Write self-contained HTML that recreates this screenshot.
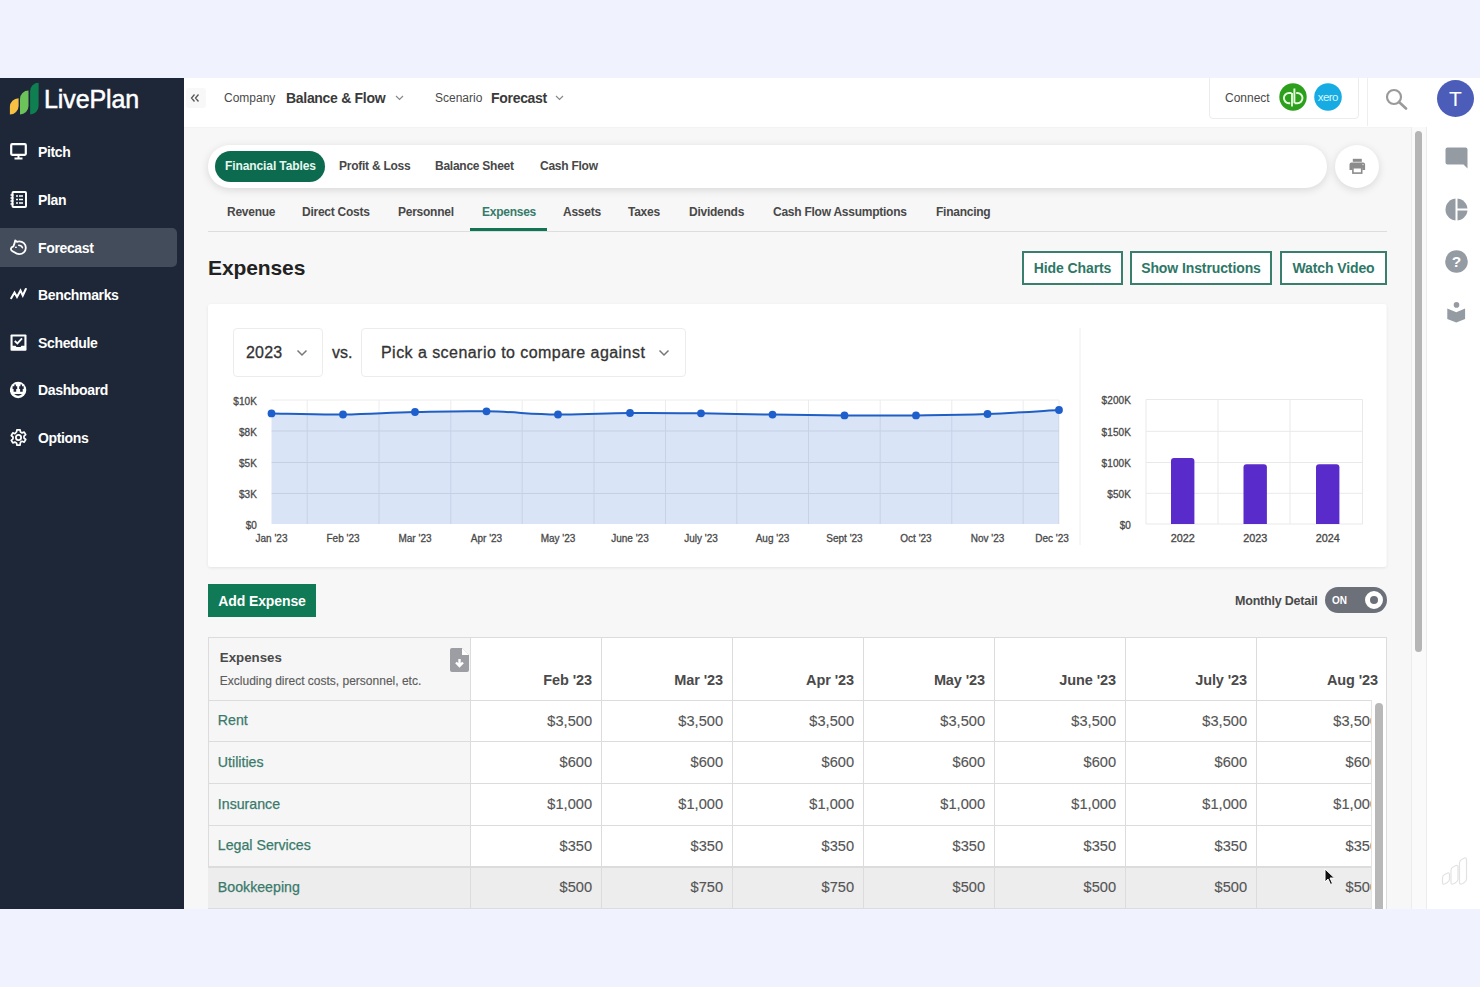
<!DOCTYPE html>
<html><head><meta charset="utf-8">
<style>
*{margin:0;padding:0;box-sizing:border-box}
html,body{width:1480px;height:987px;overflow:hidden;background:#f0f3fd;font-family:"Liberation Sans",sans-serif}
.a{position:absolute;white-space:nowrap}
#app{position:absolute;left:0;top:78px;width:1480px;height:831px;background:#f7f7f7;overflow:hidden}
#side{position:absolute;left:0;top:0;width:184px;height:831px;background:#1e2738}
.nav{position:absolute;left:0;width:177px;height:39px;color:#fff;font-weight:bold;font-size:14px;letter-spacing:-0.35px}
.nav .t{position:absolute;left:38px;top:12px;line-height:16px}
.nav svg{position:absolute;left:10px;top:11px}
.nav.on{background:#434c5a;border-radius:0 5px 5px 0}
#hdr{position:absolute;left:184px;top:0;width:1296px;height:49px;background:#fff;box-shadow:0 0.5px 0 #f0f0f0}
.tab{position:absolute;top:0;font-size:12px;font-weight:bold;color:#484848;letter-spacing:-0.25px;line-height:14px}
.btn{position:absolute;top:173px;height:34px;border:2px solid #3a7e6d;color:#2d7766;font-weight:bold;font-size:14px;line-height:30px;text-align:center;background:#fff;letter-spacing:-0.1px}
.ylab{position:absolute;font-size:10px;color:#555;text-align:right;line-height:12px;letter-spacing:-0.2px}
.xlab{position:absolute;font-size:10px;color:#555;text-align:center;line-height:12px;width:60px;letter-spacing:-0.2px}
table{border-collapse:collapse}
</style></head><body>
<div id="app">
  <!-- sidebar -->
  <div id="side">
    <svg class="a" style="left:9px;top:4px" width="32" height="34" viewBox="0 0 32 34"><path d="M0.90 32.60 V25.00 A8.70 8.70 0 0 1 9.60 16.30 V23.90 A8.70 8.70 0 0 1 0.90 32.60 Z" fill="#f7c244"/><path d="M11.00 32.60 V16.90 A8.50 8.50 0 0 1 19.50 8.40 V24.10 A8.50 8.50 0 0 1 11.00 32.60 Z" fill="#6cc35a"/><path d="M21.10 32.50 V9.20 A8.50 8.50 0 0 1 29.60 0.70 V24.00 A8.50 8.50 0 0 1 21.10 32.50 Z" fill="#0f7e51"/></svg>
    <div class="a" style="left:44px;top:6px;font-size:25px;color:#fff;line-height:30px;letter-spacing:-0.1px;-webkit-text-stroke:0.5px #fff">LivePlan</div>

    <div class="nav" style="top:54px">
      <svg width="17" height="17" viewBox="0 0 17 17"><rect x="1.2" y="1.2" width="14.6" height="10.6" rx="1" fill="none" stroke="#fff" stroke-width="2.2"/><rect x="7.5" y="12" width="2" height="3" fill="#fff"/><rect x="4.5" y="14.5" width="8" height="2" fill="#fff"/></svg>
      <div class="t">Pitch</div></div>
    <div class="nav" style="top:102px">
      <svg width="17" height="17" viewBox="0 0 17 17"><rect x="2.5" y="1" width="13.5" height="15" rx="1" fill="none" stroke="#fff" stroke-width="2"/><path d="M0.5 4h3M0.5 7h3M0.5 10h3M0.5 13h3" stroke="#fff" stroke-width="1.3"/><path d="M6 5h2M9 5h4M6 8.5h2M9 8.5h4M6 12h2M9 12h4" stroke="#fff" stroke-width="1.6"/></svg>
      <div class="t">Plan</div></div>
    <div class="nav on" style="top:150px">
      <svg width="17" height="17" viewBox="0 0 17 17"><path d="M5.2 1.5 L6.9 2.8 C7.6 2.5 8.4 2.3 9.2 2.3 C12.9 2.3 15.8 5.1 15.8 8.8 C15.8 12.6 12.9 15.2 9.2 15.2 C7.2 15.2 5.8 14.4 4.4 13.3 C3.2 12.4 1 12.2 0.9 10.2 C0.8 8.6 2 7.9 3.4 7.4 C4.2 5.5 4.8 3.6 5.2 1.5 Z" fill="none" stroke="#fff" stroke-width="1.8" stroke-linejoin="round"/><path d="M4.8 9 L6 7 L7 9Z" fill="#fff"/><path d="M8.7 6.3 Q11.4 6.3 12.5 8.7" fill="none" stroke="#fff" stroke-width="1.5" stroke-linecap="round"/></svg>
      <div class="t">Forecast</div></div>
    <div class="nav" style="top:196.5px">
      <svg width="17" height="17" viewBox="0 0 17 17"><path d="M1.2 12.2 L4.5 6.5 L7 11 L10.5 4.5 L12.8 9.5 L15.8 3" fill="none" stroke="#fff" stroke-width="2" stroke-linejoin="miter" stroke-linecap="round"/></svg>
      <div class="t">Benchmarks</div></div>
    <div class="nav" style="top:245px">
      <svg width="17" height="17" viewBox="0 0 17 17"><rect x="0.5" y="0.5" width="16" height="16.3" rx="1" fill="#fff"/><path d="M2.6 2.6 H14.4 V11.8 H11.5 L10.5 13 H6.5 L5.5 11.8 H2.6Z" fill="#1e2738"/><path d="M4.8 7 L7.4 9.4 L12 4.4" fill="none" stroke="#fff" stroke-width="1.9"/></svg>
      <div class="t">Schedule</div></div>
    <div class="nav" style="top:292px">
      <svg width="18" height="18" viewBox="0 0 18 18"><circle cx="8.1" cy="9" r="8.2" fill="#fff"/><path d="M4.3 3.4 H5.9 V5.2 H7.2 V8.1 H6.2 V10.8 H3.6 V8.1 H2.6 V5.2 H4.3Z" fill="#1e2738"/><path d="M10.4 3.4 H12 V5.2 H13.7 V8.1 H12.7 V10.8 H10.1 V8.1 H9.2 V5.2 H10.4Z" fill="#1e2738"/><path d="M4.1 13 H12.2 Q8.1 16.4 4.1 13Z" fill="#1e2738"/></svg>
      <div class="t">Dashboard</div></div>
    <div class="nav" style="top:340px">
      <svg width="17" height="17" viewBox="0 0 17 17"><path d="M7 0.8h3l0.5 2.2 1.6 0.9 2.1-0.8 1.5 2.6-1.7 1.5v1.8l1.7 1.5-1.5 2.6-2.1-0.8-1.6 0.9L10 16.2H7l-0.5-2.2-1.6-0.9-2.1 0.8-1.5-2.6 1.7-1.5V8l-1.7-1.5 1.5-2.6 2.1 0.8L6.5 3z" fill="none" stroke="#fff" stroke-width="1.7" stroke-linejoin="round"/><circle cx="8.5" cy="8.5" r="2.6" fill="none" stroke="#fff" stroke-width="1.8"/></svg>
      <div class="t">Options</div></div>
  </div>

  <!-- header -->
  <div id="hdr">
    <div class="a" style="left:2px;top:10px;width:20px;height:20px;background:#f8f8f8;border-radius:3px"></div>
    <svg class="a" style="left:6px;top:15px" width="10" height="10" viewBox="0 0 10 10"><path d="M4.5 1.5 L1.5 5 L4.5 8.5 M8.5 1.5 L5.5 5 L8.5 8.5" fill="none" stroke="#555" stroke-width="1.3"/></svg>
    <div class="a" style="left:40px;top:13px;font-size:12px;color:#4a4a4a;line-height:14px;letter-spacing:0px">Company</div>
    <div class="a" style="left:102px;top:12px;font-size:14px;font-weight:bold;color:#3a3a3a;line-height:16px;letter-spacing:-0.3px">Balance &amp; Flow</div>
    <svg class="a" style="left:211px;top:17px" width="9" height="6" viewBox="0 0 9 6"><path d="M1 1 L4.5 4.5 L8 1" fill="none" stroke="#888" stroke-width="1.2"/></svg>
    <div class="a" style="left:251px;top:13px;font-size:12px;color:#4a4a4a;line-height:14px">Scenario</div>
    <div class="a" style="left:307px;top:12px;font-size:14px;font-weight:bold;color:#3a3a3a;line-height:16px;letter-spacing:-0.3px">Forecast</div>
    <svg class="a" style="left:371px;top:17px" width="9" height="6" viewBox="0 0 9 6"><path d="M1 1 L4.5 4.5 L8 1" fill="none" stroke="#888" stroke-width="1.2"/></svg>

    <div class="a" style="left:1025px;top:-2px;width:150px;height:43px;border:1px solid #ececec;border-radius:0 0 4px 4px;background:#fff"></div>
    <div class="a" style="left:1041px;top:13px;font-size:12px;color:#4a4a4a;line-height:14px">Connect</div>
    <svg class="a" style="left:1095px;top:5px" width="28" height="28" viewBox="0 0 28 28"><circle cx="14" cy="14" r="13.7" fill="#2c9f1c"/><path d="M12.6 10 H10 A5.1 5.1 0 0 0 10 20.2 H11.2 M13 10 V23.5 M15.6 20.2 H18.4 A5.1 5.1 0 0 0 18.4 10 H17.2 M15.4 5.5 V20.2" fill="none" stroke="#e8ffe0" stroke-width="1.9"/></svg>
    <svg class="a" style="left:1130px;top:5px" width="28" height="28" viewBox="0 0 28 28"><circle cx="14" cy="14" r="13.8" fill="#16ace3"/><text x="13.8" y="17.6" font-family="Liberation Sans" font-size="11.5" fill="#d8f6ff" text-anchor="middle" letter-spacing="-0.6">xero</text></svg>
    <div class="a" style="left:1183px;top:0;width:1px;height:48px;background:#eee"></div>
    <svg class="a" style="left:1201px;top:10px" width="23" height="22" viewBox="0 0 23 22"><circle cx="9" cy="9" r="7" fill="none" stroke="#9a9a9a" stroke-width="2.2"/><path d="M14 14 L21 20.5" stroke="#9a9a9a" stroke-width="2.6" stroke-linecap="round"/></svg>
    <div class="a" style="left:1253px;top:2px;width:37px;height:37px;border-radius:50%;background:#4b5db8;color:#fff;font-size:21px;line-height:37px;text-align:center">T</div>
  </div>

  <!-- right rail -->
  <div class="a" style="left:1426px;top:49px;width:54px;height:782px;background:#fff;border-left:1px solid #ececec"></div>
  <div class="a" style="left:1411px;top:49px;width:15px;height:782px;background:#fafafa;border-left:1px solid #ececec"></div>
  <div class="a" style="left:1415px;top:53px;width:7px;height:521px;background:#b5b5b5;border-radius:4px"></div>
  <svg class="a" style="left:1445px;top:69px" width="23" height="22" viewBox="0 0 23 22"><path d="M2.5 0.5 h18 a2 2 0 0 1 2 2 v19 l-4 -4 h-16 a2 2 0 0 1 -2 -2 v-13 a2 2 0 0 1 2 -2z" fill="#959ba3"/></svg>
  <svg class="a" style="left:1445px;top:120px" width="23" height="23" viewBox="0 0 23 23"><circle cx="11.5" cy="11.5" r="11" fill="#959ba3"/><path d="M11.5 0 v23 M11.5 11.5 h12" stroke="#fff" stroke-width="2"/></svg>
  <svg class="a" style="left:1445px;top:172px" width="23" height="23" viewBox="0 0 23 23"><circle cx="11.5" cy="11.5" r="11.3" fill="#959ba3"/><text x="11.5" y="17.2" font-family="Liberation Sans" font-weight="bold" font-size="15.5" fill="#fff" text-anchor="middle">?</text></svg>
  <svg class="a" style="left:1446px;top:222px" width="21" height="24" viewBox="0 0 21 24"><circle cx="10.5" cy="4.9" r="2.8" fill="#959ba3"/><path d="M1.3 8.4 L10.3 12.2 L19.1 8.4 V19 L10.3 22.6 L1.3 19 Z" fill="#959ba3"/></svg>
  <svg class="a" style="left:1440px;top:778px" width="28" height="31" viewBox="0 0 28 31"><path d="M2.5 26.5 L2.5 22.0 Q2.5 19.5 5.0 18.3 L7.0 17.2 Q9.5 16.0 9.5 18.5 L9.5 23.0 Q9.5 25.5 7.0 26.7 L5.0 27.8 Q2.5 29.0 2.5 26.5 Z M11.0 26.5 L11.0 14.5 Q11.0 12.0 13.5 10.8 L15.5 9.7 Q18.0 8.5 18.0 11.0 L18.0 23.0 Q18.0 25.5 15.5 26.7 L13.5 27.8 Q11.0 29.0 11.0 26.5 Z M19.5 26.5 L19.5 7.0 Q19.5 4.5 22.0 3.3 L24.0 2.2 Q26.5 1.0 26.5 3.5 L26.5 23.0 Q26.5 25.5 24.0 26.7 L22.0 27.8 Q19.5 29.0 19.5 26.5 Z" fill="none" stroke="#e2e2e2" stroke-width="1.2"/></svg>

  <!-- tab bar -->
  <div class="a" style="left:208px;top:66.5px;width:1119px;height:43.5px;background:#fff;border-radius:22px;box-shadow:0 2px 8px rgba(0,0,0,0.13)"></div>
  <div class="a" style="left:214.5px;top:72.5px;width:110.5px;height:31px;background:#0c6b4f;border-radius:15.5px"></div>
  <div class="tab" style="left:225px;top:81px;color:#e6f7ef;letter-spacing:-0.1px">Financial Tables</div>
  <div class="tab" style="left:339px;top:81px">Profit &amp; Loss</div>
  <div class="tab" style="left:435px;top:81px">Balance Sheet</div>
  <div class="tab" style="left:540px;top:81px">Cash Flow</div>
  <div class="a" style="left:1335px;top:67px;width:44px;height:43px;background:#fff;border-radius:50%;box-shadow:0 2px 8px rgba(0,0,0,0.13)"></div>
  <svg class="a" style="left:1349px;top:80px" width="17" height="16" viewBox="0 0 17 16"><rect x="3.8" y="0.8" width="9" height="3" fill="#8c8c8c"/><path d="M2.5 4.6 h11.6 a2 2 0 0 1 2 2 v5.4 h-2.8 v-2.6 h-10 v2.6 h-2.8 v-5.4 a2 2 0 0 1 2 -2z" fill="#8c8c8c"/><rect x="3.9" y="9.7" width="8.8" height="5.4" fill="#fff" stroke="#8c8c8c" stroke-width="1.6"/><circle cx="14" cy="6.6" r="0.6" fill="#fff"/></svg>

  <!-- sub tabs -->
  <div class="tab" style="left:227px;top:127px">Revenue</div>
  <div class="tab" style="left:302px;top:127px">Direct Costs</div>
  <div class="tab" style="left:398px;top:127px">Personnel</div>
  <div class="tab" style="left:482px;top:127px;color:#367b6a">Expenses</div>
  <div class="tab" style="left:563px;top:127px">Assets</div>
  <div class="tab" style="left:628px;top:127px">Taxes</div>
  <div class="tab" style="left:689px;top:127px">Dividends</div>
  <div class="tab" style="left:773px;top:127px">Cash Flow Assumptions</div>
  <div class="tab" style="left:936px;top:127px">Financing</div>
  <div class="a" style="left:208px;top:153px;width:1179px;height:1px;background:#ddd"></div>
  <div class="a" style="left:469.5px;top:149.5px;width:77.5px;height:3.5px;background:#117555"></div>

  <!-- title + buttons -->
  <div class="a" style="left:208px;top:178px;font-size:21px;font-weight:bold;color:#222;line-height:24px;letter-spacing:-0.1px">Expenses</div>
  <div class="btn" style="left:1022px;width:101px">Hide Charts</div>
  <div class="btn" style="left:1130px;width:142px">Show Instructions</div>
  <div class="btn" style="left:1280px;width:107px">Watch Video</div>
<div class="a" style="left:0;top:-78px;width:1480px;height:987px">
<svg class="a" style="left:0;top:0" width="1480" height="987" viewBox="0 0 1480 987">
<defs><filter id="sh" x="-5%" y="-5%" width="110%" height="120%"><feDropShadow dx="0" dy="1" stdDeviation="1.5" flood-color="#000" flood-opacity="0.08"/></filter></defs>
<rect x="208" y="304" width="1178.5" height="263" rx="3" fill="#fff" filter="url(#sh)"/>
<line x1="271.5" y1="400" x2="1059" y2="400" stroke="#ececec" stroke-width="1"/>
<line x1="271.5" y1="431" x2="1059" y2="431" stroke="#ececec" stroke-width="1"/>
<line x1="271.5" y1="462.5" x2="1059" y2="462.5" stroke="#ececec" stroke-width="1"/>
<line x1="271.5" y1="493.5" x2="1059" y2="493.5" stroke="#ececec" stroke-width="1"/>
<line x1="307.2" y1="400" x2="307.2" y2="524" stroke="#ececec" stroke-width="1"/>
<line x1="379.0" y1="400" x2="379.0" y2="524" stroke="#ececec" stroke-width="1"/>
<line x1="450.8" y1="400" x2="450.8" y2="524" stroke="#ececec" stroke-width="1"/>
<line x1="522.2" y1="400" x2="522.2" y2="524" stroke="#ececec" stroke-width="1"/>
<line x1="594.0" y1="400" x2="594.0" y2="524" stroke="#ececec" stroke-width="1"/>
<line x1="665.5" y1="400" x2="665.5" y2="524" stroke="#ececec" stroke-width="1"/>
<line x1="736.8" y1="400" x2="736.8" y2="524" stroke="#ececec" stroke-width="1"/>
<line x1="808.5" y1="400" x2="808.5" y2="524" stroke="#ececec" stroke-width="1"/>
<line x1="880.2" y1="400" x2="880.2" y2="524" stroke="#ececec" stroke-width="1"/>
<line x1="951.8" y1="400" x2="951.8" y2="524" stroke="#ececec" stroke-width="1"/>
<line x1="1023.2" y1="400" x2="1023.2" y2="524" stroke="#ececec" stroke-width="1"/>
<line x1="1059.0" y1="400" x2="1059.0" y2="524" stroke="#ececec" stroke-width="1"/>
<path d="M271.5 413.4 C285.8 413.6 314.3 414.8 343.0 414.5 C371.7 414.2 386.3 412.6 415.0 412.0 C443.7 411.4 457.9 410.8 486.5 411.3 C515.1 411.8 529.3 414.2 558.0 414.5 C586.7 414.8 601.4 413.2 630.0 413.0 C658.6 412.8 672.5 413.0 701.0 413.3 C729.5 413.6 743.8 414.2 772.5 414.6 C801.2 415.0 815.8 415.2 844.5 415.4 C873.2 415.6 887.4 415.7 916.0 415.4 C944.6 415.1 958.9 415.1 987.5 414.0 C1016.1 412.9 1044.7 410.8 1059.0 410.0 L1059 524 L271.5 524 Z" fill="#d9e4f7"/>
<clipPath id="ac"><path d="M271.5 413.4 C285.8 413.6 314.3 414.8 343.0 414.5 C371.7 414.2 386.3 412.6 415.0 412.0 C443.7 411.4 457.9 410.8 486.5 411.3 C515.1 411.8 529.3 414.2 558.0 414.5 C586.7 414.8 601.4 413.2 630.0 413.0 C658.6 412.8 672.5 413.0 701.0 413.3 C729.5 413.6 743.8 414.2 772.5 414.6 C801.2 415.0 815.8 415.2 844.5 415.4 C873.2 415.6 887.4 415.7 916.0 415.4 C944.6 415.1 958.9 415.1 987.5 414.0 C1016.1 412.9 1044.7 410.8 1059.0 410.0 L1059 524 L271.5 524 Z"/></clipPath>
<g clip-path="url(#ac)">
<line x1="271.5" y1="431" x2="1059" y2="431" stroke="#c5d0e3" stroke-width="1"/>
<line x1="271.5" y1="462.5" x2="1059" y2="462.5" stroke="#c5d0e3" stroke-width="1"/>
<line x1="271.5" y1="493.5" x2="1059" y2="493.5" stroke="#c5d0e3" stroke-width="1"/>
<line x1="307.2" y1="400" x2="307.2" y2="524" stroke="#c8d2e5" stroke-width="1"/>
<line x1="379.0" y1="400" x2="379.0" y2="524" stroke="#c8d2e5" stroke-width="1"/>
<line x1="450.8" y1="400" x2="450.8" y2="524" stroke="#c8d2e5" stroke-width="1"/>
<line x1="522.2" y1="400" x2="522.2" y2="524" stroke="#c8d2e5" stroke-width="1"/>
<line x1="594.0" y1="400" x2="594.0" y2="524" stroke="#c8d2e5" stroke-width="1"/>
<line x1="665.5" y1="400" x2="665.5" y2="524" stroke="#c8d2e5" stroke-width="1"/>
<line x1="736.8" y1="400" x2="736.8" y2="524" stroke="#c8d2e5" stroke-width="1"/>
<line x1="808.5" y1="400" x2="808.5" y2="524" stroke="#c8d2e5" stroke-width="1"/>
<line x1="880.2" y1="400" x2="880.2" y2="524" stroke="#c8d2e5" stroke-width="1"/>
<line x1="951.8" y1="400" x2="951.8" y2="524" stroke="#c8d2e5" stroke-width="1"/>
<line x1="1023.2" y1="400" x2="1023.2" y2="524" stroke="#c8d2e5" stroke-width="1"/>
<line x1="1059.0" y1="400" x2="1059.0" y2="524" stroke="#c8d2e5" stroke-width="1"/>
</g>
<path d="M271.5 413.4 C285.8 413.6 314.3 414.8 343.0 414.5 C371.7 414.2 386.3 412.6 415.0 412.0 C443.7 411.4 457.9 410.8 486.5 411.3 C515.1 411.8 529.3 414.2 558.0 414.5 C586.7 414.8 601.4 413.2 630.0 413.0 C658.6 412.8 672.5 413.0 701.0 413.3 C729.5 413.6 743.8 414.2 772.5 414.6 C801.2 415.0 815.8 415.2 844.5 415.4 C873.2 415.6 887.4 415.7 916.0 415.4 C944.6 415.1 958.9 415.1 987.5 414.0 C1016.1 412.9 1044.7 410.8 1059.0 410.0" fill="none" stroke="#1f5ec4" stroke-width="2"/>
<circle cx="271.5" cy="413.4" r="3.9" fill="#1f5fcc"/>
<circle cx="343.0" cy="414.5" r="3.9" fill="#1f5fcc"/>
<circle cx="415.0" cy="412.0" r="3.9" fill="#1f5fcc"/>
<circle cx="486.5" cy="411.3" r="3.9" fill="#1f5fcc"/>
<circle cx="558.0" cy="414.5" r="3.9" fill="#1f5fcc"/>
<circle cx="630.0" cy="413.0" r="3.9" fill="#1f5fcc"/>
<circle cx="701.0" cy="413.3" r="3.9" fill="#1f5fcc"/>
<circle cx="772.5" cy="414.6" r="3.9" fill="#1f5fcc"/>
<circle cx="844.5" cy="415.4" r="3.9" fill="#1f5fcc"/>
<circle cx="916.0" cy="415.4" r="3.9" fill="#1f5fcc"/>
<circle cx="987.5" cy="414.0" r="3.9" fill="#1f5fcc"/>
<circle cx="1059.0" cy="410.0" r="3.9" fill="#1f5fcc"/>
<text x="257" y="404.8" font-size="10" fill="#4a4a4a" stroke="#4a4a4a" stroke-width="0.3" text-anchor="end" letter-spacing="0.1">$10K</text>
<text x="257" y="435.8" font-size="10" fill="#4a4a4a" stroke="#4a4a4a" stroke-width="0.3" text-anchor="end" letter-spacing="0.1">$8K</text>
<text x="257" y="467.3" font-size="10" fill="#4a4a4a" stroke="#4a4a4a" stroke-width="0.3" text-anchor="end" letter-spacing="0.1">$5K</text>
<text x="257" y="498.3" font-size="10" fill="#4a4a4a" stroke="#4a4a4a" stroke-width="0.3" text-anchor="end" letter-spacing="0.1">$3K</text>
<text x="257" y="528.8" font-size="10" fill="#4a4a4a" stroke="#4a4a4a" stroke-width="0.3" text-anchor="end" letter-spacing="0.1">$0</text>
<text x="271.5" y="541.6" font-size="10" fill="#4a4a4a" stroke="#4a4a4a" stroke-width="0.3" text-anchor="middle" letter-spacing="0">Jan &#39;23</text>
<text x="343.0" y="541.6" font-size="10" fill="#4a4a4a" stroke="#4a4a4a" stroke-width="0.3" text-anchor="middle" letter-spacing="0">Feb &#39;23</text>
<text x="415.0" y="541.6" font-size="10" fill="#4a4a4a" stroke="#4a4a4a" stroke-width="0.3" text-anchor="middle" letter-spacing="0">Mar &#39;23</text>
<text x="486.5" y="541.6" font-size="10" fill="#4a4a4a" stroke="#4a4a4a" stroke-width="0.3" text-anchor="middle" letter-spacing="0">Apr &#39;23</text>
<text x="558.0" y="541.6" font-size="10" fill="#4a4a4a" stroke="#4a4a4a" stroke-width="0.3" text-anchor="middle" letter-spacing="0">May &#39;23</text>
<text x="630.0" y="541.6" font-size="10" fill="#4a4a4a" stroke="#4a4a4a" stroke-width="0.3" text-anchor="middle" letter-spacing="0">June &#39;23</text>
<text x="701.0" y="541.6" font-size="10" fill="#4a4a4a" stroke="#4a4a4a" stroke-width="0.3" text-anchor="middle" letter-spacing="0">July &#39;23</text>
<text x="772.5" y="541.6" font-size="10" fill="#4a4a4a" stroke="#4a4a4a" stroke-width="0.3" text-anchor="middle" letter-spacing="0">Aug &#39;23</text>
<text x="844.5" y="541.6" font-size="10" fill="#4a4a4a" stroke="#4a4a4a" stroke-width="0.3" text-anchor="middle" letter-spacing="0">Sept &#39;23</text>
<text x="916.0" y="541.6" font-size="10" fill="#4a4a4a" stroke="#4a4a4a" stroke-width="0.3" text-anchor="middle" letter-spacing="0">Oct &#39;23</text>
<text x="987.5" y="541.6" font-size="10" fill="#4a4a4a" stroke="#4a4a4a" stroke-width="0.3" text-anchor="middle" letter-spacing="0">Nov &#39;23</text>
<text x="1052.0" y="541.6" font-size="10" fill="#4a4a4a" stroke="#4a4a4a" stroke-width="0.3" text-anchor="middle" letter-spacing="0">Dec &#39;23</text>
<line x1="1080" y1="328" x2="1080" y2="545" stroke="#eeeeee" stroke-width="1"/>
<line x1="1146" y1="399.5" x2="1362.5" y2="399.5" stroke="#e9e9e9" stroke-width="1"/>
<line x1="1146" y1="431.3" x2="1362.5" y2="431.3" stroke="#e9e9e9" stroke-width="1"/>
<line x1="1146" y1="462.5" x2="1362.5" y2="462.5" stroke="#e9e9e9" stroke-width="1"/>
<line x1="1146" y1="493.3" x2="1362.5" y2="493.3" stroke="#e9e9e9" stroke-width="1"/>
<line x1="1146" y1="524" x2="1362.5" y2="524" stroke="#e9e9e9" stroke-width="1"/>
<line x1="1146" y1="399.5" x2="1146" y2="524" stroke="#e9e9e9" stroke-width="1"/>
<line x1="1218" y1="399.5" x2="1218" y2="524" stroke="#e9e9e9" stroke-width="1"/>
<line x1="1290" y1="399.5" x2="1290" y2="524" stroke="#e9e9e9" stroke-width="1"/>
<line x1="1362.5" y1="399.5" x2="1362.5" y2="524" stroke="#e9e9e9" stroke-width="1"/>
<path d="M1171.0 524 V461.0 a3 3 0 0 1 3 -3 h17.4 a3 3 0 0 1 3 3 V524 Z" fill="#5a2bcb"/>
<path d="M1243.5 524 V467.3 a3 3 0 0 1 3 -3 h17.4 a3 3 0 0 1 3 3 V524 Z" fill="#5a2bcb"/>
<path d="M1316.0 524 V467.3 a3 3 0 0 1 3 -3 h17.4 a3 3 0 0 1 3 3 V524 Z" fill="#5a2bcb"/>
<text x="1131" y="404.3" font-size="10" fill="#4a4a4a" stroke="#4a4a4a" stroke-width="0.3" text-anchor="end" letter-spacing="0.1">$200K</text>
<text x="1131" y="436.1" font-size="10" fill="#4a4a4a" stroke="#4a4a4a" stroke-width="0.3" text-anchor="end" letter-spacing="0.1">$150K</text>
<text x="1131" y="467.3" font-size="10" fill="#4a4a4a" stroke="#4a4a4a" stroke-width="0.3" text-anchor="end" letter-spacing="0.1">$100K</text>
<text x="1131" y="498.1" font-size="10" fill="#4a4a4a" stroke="#4a4a4a" stroke-width="0.3" text-anchor="end" letter-spacing="0.1">$50K</text>
<text x="1131" y="528.8" font-size="10" fill="#4a4a4a" stroke="#4a4a4a" stroke-width="0.3" text-anchor="end" letter-spacing="0.1">$0</text>
<text x="1182.7" y="541.8" font-size="10.8" fill="#4a4a4a" stroke="#4a4a4a" stroke-width="0.35" text-anchor="middle">2022</text>
<text x="1255.2" y="541.8" font-size="10.8" fill="#4a4a4a" stroke="#4a4a4a" stroke-width="0.35" text-anchor="middle">2023</text>
<text x="1327.7" y="541.8" font-size="10.8" fill="#4a4a4a" stroke="#4a4a4a" stroke-width="0.35" text-anchor="middle">2024</text>
</svg>
<div class="a" style="left:233px;top:328px;width:90px;height:49px;border:1px solid #ececec;border-radius:4px;background:#fff"></div>
<div class="a" style="left:246px;top:344px;font-size:16px;color:#333;line-height:18px;letter-spacing:0.2px;-webkit-text-stroke:0.3px #333">2023</div>
<svg class="a" style="left:296px;top:349px" width="12" height="8" viewBox="0 0 12 8"><path d="M1.5 1.5 L6 6 L10.5 1.5" fill="none" stroke="#777" stroke-width="1.5"/></svg>
<div class="a" style="left:332px;top:344px;font-size:16px;color:#333;line-height:18px;-webkit-text-stroke:0.3px #333">vs.</div>
<div class="a" style="left:361px;top:328px;width:325px;height:49px;border:1px solid #ececec;border-radius:4px;background:#fff"></div>
<div class="a" style="left:381px;top:344px;font-size:16px;color:#333;line-height:18px;letter-spacing:0.45px;-webkit-text-stroke:0.3px #333">Pick a scenario to compare against</div>
<svg class="a" style="left:658px;top:349px" width="12" height="8" viewBox="0 0 12 8"><path d="M1.5 1.5 L6 6 L10.5 1.5" fill="none" stroke="#777" stroke-width="1.5"/></svg>
<div class="a" style="left:208px;top:584px;width:108px;height:33px;background:#0f7a55;color:#fff;font-weight:bold;font-size:14px;line-height:35px;text-align:center;letter-spacing:-0.1px">Add Expense</div>
<div class="a" style="left:1235px;top:594px;font-size:12.5px;font-weight:bold;color:#4a4a4a;line-height:14px;letter-spacing:-0.2px">Monthly Detail</div>
<div class="a" style="left:1325px;top:587px;width:62px;height:26px;background:#6b7079;border-radius:13px"></div>
<div class="a" style="left:1332px;top:595px;font-size:10px;font-weight:bold;color:#fff;line-height:11px">ON</div>
<div class="a" style="left:1365px;top:591px;width:18px;height:18px;border-radius:50%;border:5px solid #fff;background:#6b7079"></div>
<div class="a" style="left:208px;top:637px;width:1179px;height:280px;overflow:hidden">
<div class="a" style="left:0;top:0;width:1179px;height:280px;background:#fff;border:1px solid #dcdcdc"></div>
<div class="a" style="left:0;top:0;width:263px;height:280px;background:#f6f6f6;border:1px solid #dcdcdc"></div>
<div class="a" style="left:0;top:229.3px;width:1163px;height:42px;background:#ededed"></div>
<div class="a" style="left:0;top:62.5px;width:1179px;height:1.3px;background:#dcdcdc"></div>
<div class="a" style="left:0;top:104.2px;width:1179px;height:1.3px;background:#dcdcdc"></div>
<div class="a" style="left:0;top:145.9px;width:1179px;height:1.3px;background:#dcdcdc"></div>
<div class="a" style="left:0;top:187.6px;width:1179px;height:1.3px;background:#dcdcdc"></div>
<div class="a" style="left:0;top:229.3px;width:1179px;height:1.3px;background:#dcdcdc"></div>
<div class="a" style="left:0;top:271.0px;width:1179px;height:1.3px;background:#dcdcdc"></div>
<div class="a" style="left:262.0px;top:0;width:1.3px;height:280px;background:#dcdcdc"></div>
<div class="a" style="left:393.0px;top:0;width:1.3px;height:280px;background:#dcdcdc"></div>
<div class="a" style="left:524.0px;top:0;width:1.3px;height:280px;background:#dcdcdc"></div>
<div class="a" style="left:655.0px;top:0;width:1.3px;height:280px;background:#dcdcdc"></div>
<div class="a" style="left:786.0px;top:0;width:1.3px;height:280px;background:#dcdcdc"></div>
<div class="a" style="left:917.0px;top:0;width:1.3px;height:280px;background:#dcdcdc"></div>
<div class="a" style="left:1048.0px;top:0;width:1.3px;height:280px;background:#dcdcdc"></div>
<div class="a" style="left:11.8px;top:13px;font-size:13.3px;font-weight:bold;color:#4a4a4a;line-height:16px;letter-spacing:0px">Expenses</div>
<div class="a" style="left:11.8px;top:37px;font-size:12px;color:#5c5c5c;line-height:14px;letter-spacing:0px;-webkit-text-stroke:0.15px #5c5c5c">Excluding direct costs, personnel, etc.</div>
<svg class="a" style="left:242px;top:11px" width="19" height="24" viewBox="0 0 19 24"><path d="M2 0 h10 l7 7 v15 a2 2 0 0 1 -2 2 h-15 a2 2 0 0 1 -2 -2 v-20 a2 2 0 0 1 2 -2z" fill="#9c9ea3"/><path d="M12 0 v7 h7" fill="#fff"/><path d="M12.5 1 v5.5 h5.5z" fill="#fff"/><path d="M9.5 11 v6 M6 14.5 l3.5 3.5 l3.5 -3.5" fill="none" stroke="#fff" stroke-width="2.4"/></svg>
<div class="a" style="left:262px;top:35px;width:122px;text-align:right;font-size:14.5px;font-weight:bold;color:#4a4a4a;line-height:16px;letter-spacing:-0.1px">Feb &#39;23</div>
<div class="a" style="left:393px;top:35px;width:122px;text-align:right;font-size:14.5px;font-weight:bold;color:#4a4a4a;line-height:16px;letter-spacing:-0.1px">Mar &#39;23</div>
<div class="a" style="left:524px;top:35px;width:122px;text-align:right;font-size:14.5px;font-weight:bold;color:#4a4a4a;line-height:16px;letter-spacing:-0.1px">Apr &#39;23</div>
<div class="a" style="left:655px;top:35px;width:122px;text-align:right;font-size:14.5px;font-weight:bold;color:#4a4a4a;line-height:16px;letter-spacing:-0.1px">May &#39;23</div>
<div class="a" style="left:786px;top:35px;width:122px;text-align:right;font-size:14.5px;font-weight:bold;color:#4a4a4a;line-height:16px;letter-spacing:-0.1px">June &#39;23</div>
<div class="a" style="left:917px;top:35px;width:122px;text-align:right;font-size:14.5px;font-weight:bold;color:#4a4a4a;line-height:16px;letter-spacing:-0.1px">July &#39;23</div>
<div class="a" style="left:1048px;top:35px;width:122px;text-align:right;font-size:14.5px;font-weight:bold;color:#4a4a4a;line-height:16px;letter-spacing:-0.1px">Aug &#39;23</div>
<div class="a" style="left:9.8px;top:75.2px;font-size:14.2px;color:#3a7a6b;line-height:17px;letter-spacing:0px;-webkit-text-stroke:0.25px #3a7a6b">Rent</div>
<div class="a" style="left:262px;top:75.5px;width:122px;text-align:right;font-size:14.6px;color:#555;line-height:17px;-webkit-text-stroke:0.15px #555">$3,500</div>
<div class="a" style="left:393px;top:75.5px;width:122px;text-align:right;font-size:14.6px;color:#555;line-height:17px;-webkit-text-stroke:0.15px #555">$3,500</div>
<div class="a" style="left:524px;top:75.5px;width:122px;text-align:right;font-size:14.6px;color:#555;line-height:17px;-webkit-text-stroke:0.15px #555">$3,500</div>
<div class="a" style="left:655px;top:75.5px;width:122px;text-align:right;font-size:14.6px;color:#555;line-height:17px;-webkit-text-stroke:0.15px #555">$3,500</div>
<div class="a" style="left:786px;top:75.5px;width:122px;text-align:right;font-size:14.6px;color:#555;line-height:17px;-webkit-text-stroke:0.15px #555">$3,500</div>
<div class="a" style="left:917px;top:75.5px;width:122px;text-align:right;font-size:14.6px;color:#555;line-height:17px;-webkit-text-stroke:0.15px #555">$3,500</div>
<div class="a" style="left:1048px;top:75.5px;width:122px;text-align:right;font-size:14.6px;color:#555;line-height:17px;-webkit-text-stroke:0.15px #555">$3,500</div>
<div class="a" style="left:9.8px;top:116.9px;font-size:14.2px;color:#3a7a6b;line-height:17px;letter-spacing:0px;-webkit-text-stroke:0.25px #3a7a6b">Utilities</div>
<div class="a" style="left:262px;top:117.2px;width:122px;text-align:right;font-size:14.6px;color:#555;line-height:17px;-webkit-text-stroke:0.15px #555">$600</div>
<div class="a" style="left:393px;top:117.2px;width:122px;text-align:right;font-size:14.6px;color:#555;line-height:17px;-webkit-text-stroke:0.15px #555">$600</div>
<div class="a" style="left:524px;top:117.2px;width:122px;text-align:right;font-size:14.6px;color:#555;line-height:17px;-webkit-text-stroke:0.15px #555">$600</div>
<div class="a" style="left:655px;top:117.2px;width:122px;text-align:right;font-size:14.6px;color:#555;line-height:17px;-webkit-text-stroke:0.15px #555">$600</div>
<div class="a" style="left:786px;top:117.2px;width:122px;text-align:right;font-size:14.6px;color:#555;line-height:17px;-webkit-text-stroke:0.15px #555">$600</div>
<div class="a" style="left:917px;top:117.2px;width:122px;text-align:right;font-size:14.6px;color:#555;line-height:17px;-webkit-text-stroke:0.15px #555">$600</div>
<div class="a" style="left:1048px;top:117.2px;width:122px;text-align:right;font-size:14.6px;color:#555;line-height:17px;-webkit-text-stroke:0.15px #555">$600</div>
<div class="a" style="left:9.8px;top:158.6px;font-size:14.2px;color:#3a7a6b;line-height:17px;letter-spacing:0px;-webkit-text-stroke:0.25px #3a7a6b">Insurance</div>
<div class="a" style="left:262px;top:158.9px;width:122px;text-align:right;font-size:14.6px;color:#555;line-height:17px;-webkit-text-stroke:0.15px #555">$1,000</div>
<div class="a" style="left:393px;top:158.9px;width:122px;text-align:right;font-size:14.6px;color:#555;line-height:17px;-webkit-text-stroke:0.15px #555">$1,000</div>
<div class="a" style="left:524px;top:158.9px;width:122px;text-align:right;font-size:14.6px;color:#555;line-height:17px;-webkit-text-stroke:0.15px #555">$1,000</div>
<div class="a" style="left:655px;top:158.9px;width:122px;text-align:right;font-size:14.6px;color:#555;line-height:17px;-webkit-text-stroke:0.15px #555">$1,000</div>
<div class="a" style="left:786px;top:158.9px;width:122px;text-align:right;font-size:14.6px;color:#555;line-height:17px;-webkit-text-stroke:0.15px #555">$1,000</div>
<div class="a" style="left:917px;top:158.9px;width:122px;text-align:right;font-size:14.6px;color:#555;line-height:17px;-webkit-text-stroke:0.15px #555">$1,000</div>
<div class="a" style="left:1048px;top:158.9px;width:122px;text-align:right;font-size:14.6px;color:#555;line-height:17px;-webkit-text-stroke:0.15px #555">$1,000</div>
<div class="a" style="left:9.8px;top:200.3px;font-size:14.2px;color:#3a7a6b;line-height:17px;letter-spacing:0px;-webkit-text-stroke:0.25px #3a7a6b">Legal Services</div>
<div class="a" style="left:262px;top:200.6px;width:122px;text-align:right;font-size:14.6px;color:#555;line-height:17px;-webkit-text-stroke:0.15px #555">$350</div>
<div class="a" style="left:393px;top:200.6px;width:122px;text-align:right;font-size:14.6px;color:#555;line-height:17px;-webkit-text-stroke:0.15px #555">$350</div>
<div class="a" style="left:524px;top:200.6px;width:122px;text-align:right;font-size:14.6px;color:#555;line-height:17px;-webkit-text-stroke:0.15px #555">$350</div>
<div class="a" style="left:655px;top:200.6px;width:122px;text-align:right;font-size:14.6px;color:#555;line-height:17px;-webkit-text-stroke:0.15px #555">$350</div>
<div class="a" style="left:786px;top:200.6px;width:122px;text-align:right;font-size:14.6px;color:#555;line-height:17px;-webkit-text-stroke:0.15px #555">$350</div>
<div class="a" style="left:917px;top:200.6px;width:122px;text-align:right;font-size:14.6px;color:#555;line-height:17px;-webkit-text-stroke:0.15px #555">$350</div>
<div class="a" style="left:1048px;top:200.6px;width:122px;text-align:right;font-size:14.6px;color:#555;line-height:17px;-webkit-text-stroke:0.15px #555">$350</div>
<div class="a" style="left:9.8px;top:242.0px;font-size:14.2px;color:#3a7a6b;line-height:17px;letter-spacing:0px;-webkit-text-stroke:0.25px #3a7a6b">Bookkeeping</div>
<div class="a" style="left:262px;top:242.3px;width:122px;text-align:right;font-size:14.6px;color:#555;line-height:17px;-webkit-text-stroke:0.15px #555">$500</div>
<div class="a" style="left:393px;top:242.3px;width:122px;text-align:right;font-size:14.6px;color:#555;line-height:17px;-webkit-text-stroke:0.15px #555">$750</div>
<div class="a" style="left:524px;top:242.3px;width:122px;text-align:right;font-size:14.6px;color:#555;line-height:17px;-webkit-text-stroke:0.15px #555">$750</div>
<div class="a" style="left:655px;top:242.3px;width:122px;text-align:right;font-size:14.6px;color:#555;line-height:17px;-webkit-text-stroke:0.15px #555">$500</div>
<div class="a" style="left:786px;top:242.3px;width:122px;text-align:right;font-size:14.6px;color:#555;line-height:17px;-webkit-text-stroke:0.15px #555">$500</div>
<div class="a" style="left:917px;top:242.3px;width:122px;text-align:right;font-size:14.6px;color:#555;line-height:17px;-webkit-text-stroke:0.15px #555">$500</div>
<div class="a" style="left:1048px;top:242.3px;width:122px;text-align:right;font-size:14.6px;color:#555;line-height:17px;-webkit-text-stroke:0.15px #555">$500</div>
<div class="a" style="left:1163px;top:63px;width:15px;height:220px;background:#fff;border-left:1px solid #e4e4e4"></div>
<div class="a" style="left:1167px;top:66px;width:7.5px;height:220px;background:#b8b8b8;border-radius:4px"></div>
</div>
<svg class="a" style="left:1323.7px;top:867.5px" width="12" height="18" viewBox="0 0 12 18"><path d="M1 1 L1 14 L4 11 L6.5 16.5 L8.5 15.5 L6 10 L10.5 10 Z" fill="#111" stroke="#fff" stroke-width="1"/></svg>
</div>
</div>
</body></html>
